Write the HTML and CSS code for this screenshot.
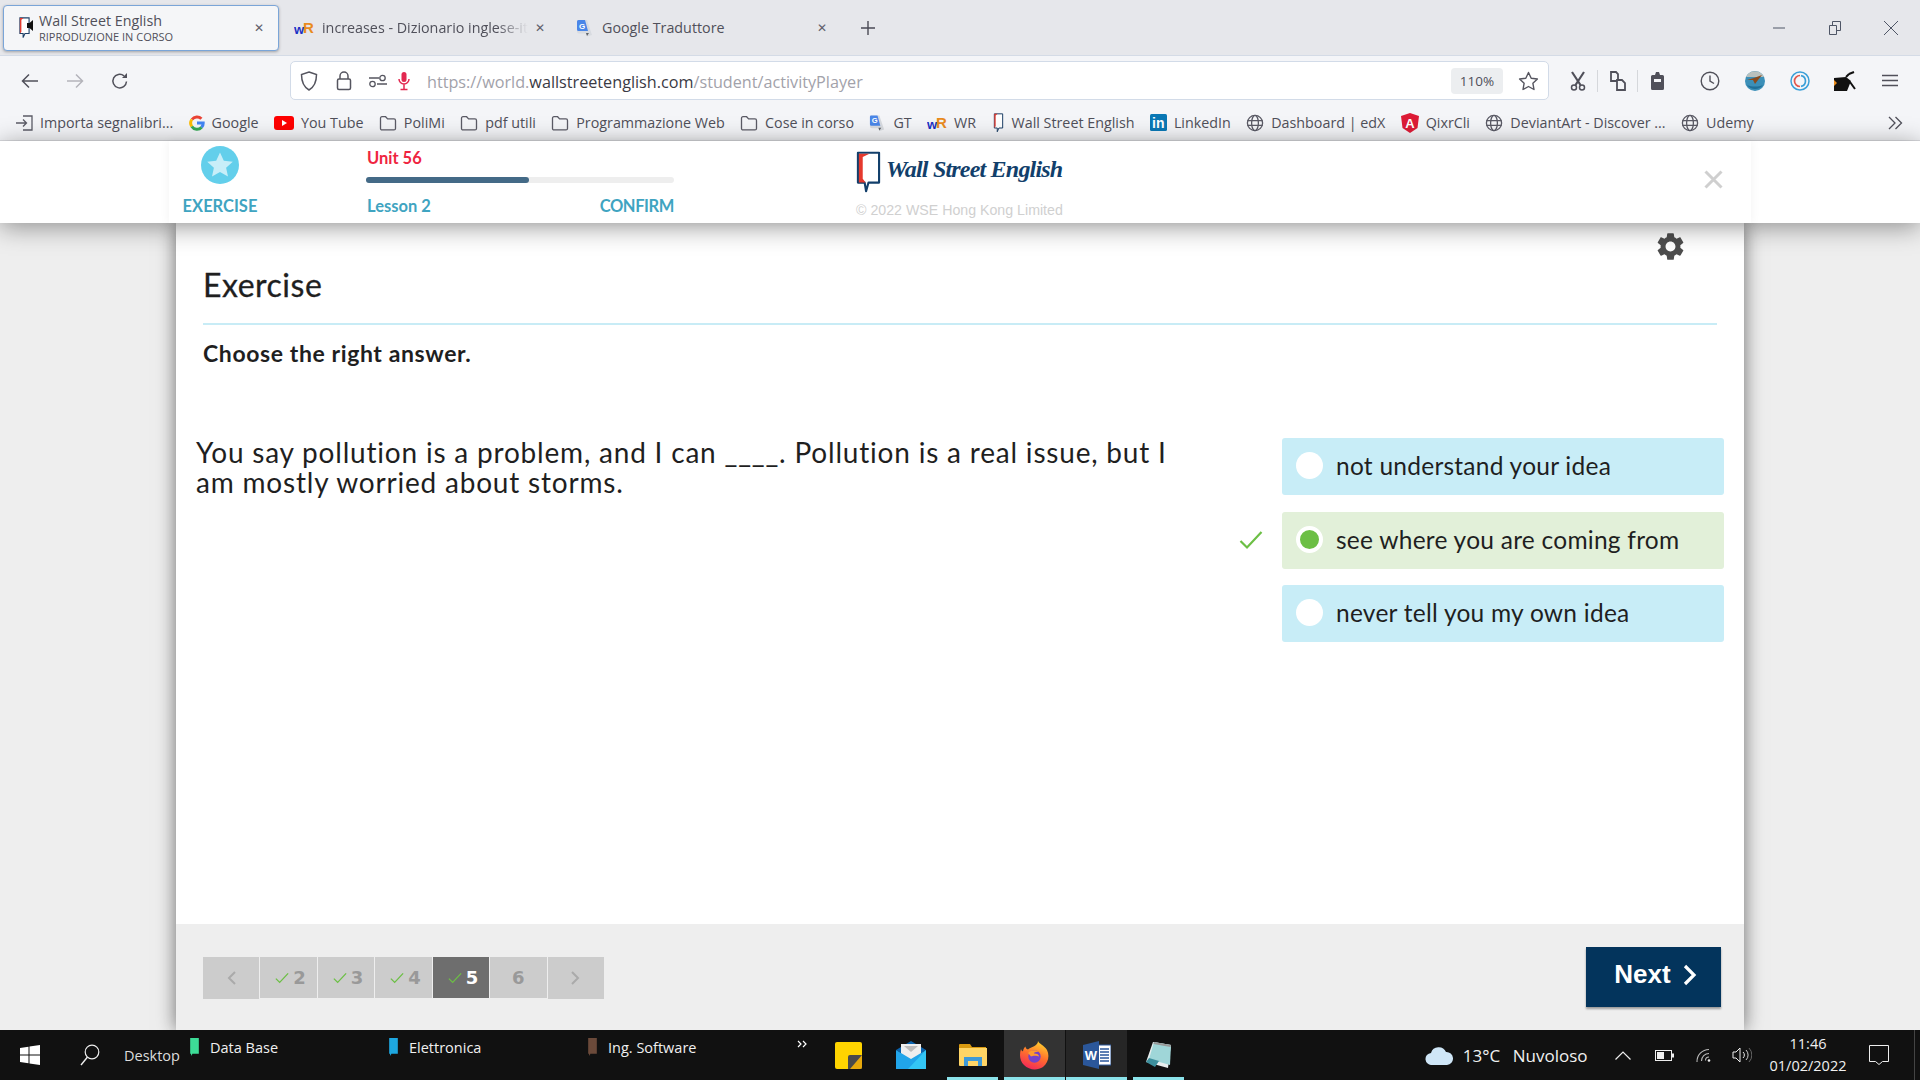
FILE: index.html
```html
<!DOCTYPE html>
<html lang="it">
<head>
    <meta charset="UTF-8">
    <title>Wall Street English</title>
    <link rel="stylesheet" href="styles.css">
</head>
<body>
    <svg class="defs" width="0" height="0">
        <symbol id="folder" viewBox="0 0 18 16"><path d="M1.5 3.2c0-.9.6-1.5 1.5-1.5h3.6l2 2.2H15c.9 0 1.5.6 1.5 1.5v8c0 .9-.6 1.5-1.5 1.5H3c-.9 0-1.5-.6-1.5-1.5z" fill="none" stroke="#5b5b66" stroke-width="1.3"/></symbol>
        <symbol id="globe" viewBox="0 0 18 18"><g fill="none" stroke="#5b5b66" stroke-width="1.3"><circle cx="9" cy="9" r="7.6"/><ellipse cx="9" cy="9" rx="3.4" ry="7.6"/><path d="M1.4 6.6h15.2M1.4 11.4h15.2"/></g></symbol>
        <symbol id="gt" viewBox="0 0 18 18"><path d="M1 1h10l5 15-5 1.5-1-3H3a2 2 0 0 1-2-2z" fill="#d8dbe0"/><path d="M1 2.5A1.5 1.5 0 0 1 2.5 1H9l3 11H2.5A1.5 1.5 0 0 1 1 10.5z" fill="#4a86e8"/><text x="3" y="9.5" font-size="8" font-weight="700" fill="#fff" font-family="Liberation Sans">G</text><path d="M10 14h3l-2 3z" fill="#5f6368"/></symbol>
        <symbol id="wr" viewBox="0 0 20 14"><text x="0" y="13" font-size="13" font-weight="700" fill="#1b2fc4" font-family="Liberation Sans">w</text><text x="9" y="12" font-size="15" font-weight="700" fill="#e98b1f" font-family="Liberation Sans">R</text></symbol>
        <symbol id="wse" viewBox="0 0 14 24"><path d="M2 1h10v17H7.5L5.5 22.5V18H2z" fill="#fff" stroke="#1d3f66" stroke-width="1.2"/><path d="M2 1h4L3.6 3v13L2 18z" fill="#e23b30"/></symbol>
        <symbol id="tick" viewBox="0 0 24 20"><path d="M1.5 11L8 17.5 22.5 2" fill="none" stroke="#6cbf45" stroke-width="2.2"/></symbol>
    </svg>

    <div class="window">
        <!-- Schede del browser -->
        <div class="tabstrip">
            <div class="tab tab-active">
                <svg class="tab-icon" width="18" height="22" viewBox="0 0 18 22"><use href="#wse" width="13" height="22"/><path d="M9 6h2.5L15 3v11l-3.5-3H9z" fill="#111"/></svg>
                <div class="tab-titles">
                    <div class="tab-name">Wall Street English</div>
                    <div class="tab-sub">RIPRODUZIONE IN CORSO</div>
                </div>
                <span class="tab-close">✕</span>
            </div>
            <div class="tab">
                <svg class="tab-icon" width="20" height="14"><use href="#wr"/></svg>
                <div class="tab-name tab-fade">increases - Dizionario inglese-it</div>
                <span class="tab-close">✕</span>
            </div>
            <div class="tab">
                <svg class="tab-icon" width="18" height="18"><use href="#gt"/></svg>
                <div class="tab-name">Google Traduttore</div>
                <span class="tab-close">✕</span>
            </div>
            <svg class="new-tab" width="16" height="16" viewBox="0 0 16 16"><path d="M8 1v14M1 8h14" stroke="#4a4a55" stroke-width="1.4"/></svg>
            <div class="win-controls">
                <div class="win-btn"><svg width="12" height="12" viewBox="0 0 12 12"><path d="M0 6h12" stroke="#4f5666"/></svg></div>
                <div class="win-btn"><svg width="12" height="14" viewBox="0 0 12 14"><path d="M.5 4.5h7v9h-7zM3.5 4V.5h8v9H8" fill="none" stroke="#4f5666"/></svg></div>
                <div class="win-btn"><svg width="14" height="14" viewBox="0 0 14 14"><path d="M0 0l14 14M14 0L0 14" stroke="#4f5666"/></svg></div>
            </div>
        </div>

        <!-- Barra indirizzi -->
        <div class="toolbar">
            <div class="nav-btn"><svg width="18" height="16" viewBox="0 0 18 16"><path d="M17 8H2M8 1.5L1.5 8 8 14.5" fill="none" stroke="#50505a" stroke-width="1.5"/></svg></div>
            <div class="nav-btn"><svg width="18" height="16" viewBox="0 0 18 16"><path d="M1 8h15M10 1.5L16.5 8 10 14.5" fill="none" stroke="#b4b4ba" stroke-width="1.5"/></svg></div>
            <div class="nav-btn"><svg width="18" height="18" viewBox="0 0 18 18"><path d="M15.5 9.5A6.8 6.8 0 1 1 13 3.8" fill="none" stroke="#50505a" stroke-width="1.5"/><path d="M16 1v5h-5z" fill="#50505a"/></svg></div>
            <div class="urlbar">
                <svg class="url-shield" width="18" height="20" viewBox="0 0 18 20"><path d="M9 1l7.5 2.5c0 7-1.5 12-7.5 15.5C3 15.5 1.5 10.5 1.5 3.5z" fill="none" stroke="#55555f" stroke-width="1.5"/></svg>
                <svg class="url-lock" width="16" height="20" viewBox="0 0 16 20"><path d="M4 8V5a4 4 0 0 1 8 0v3" fill="none" stroke="#55555f" stroke-width="1.5"/><rect x="1.5" y="8" width="13" height="10.5" rx="1.5" fill="none" stroke="#55555f" stroke-width="1.5"/></svg>
                <svg class="url-perm" width="18" height="14" viewBox="0 0 18 14"><path d="M0 4h10M8 10h10" stroke="#55555f" stroke-width="1.5"/><circle cx="13.5" cy="4" r="2.7" fill="none" stroke="#55555f" stroke-width="1.3"/><circle cx="3.5" cy="10" r="2.7" fill="none" stroke="#55555f" stroke-width="1.3"/></svg>
                <svg class="url-mic" width="12" height="20" viewBox="0 0 12 20"><rect x="3.5" y="1" width="5" height="10" rx="2.5" fill="#e22850"/><path d="M1 8a5 5 0 0 0 10 0M6 13v5M2.5 18.5h7" fill="none" stroke="#e22850" stroke-width="1.5"/></svg>
                <div class="url-text">https://world.<span class="url-host">wallstreetenglish.com</span>/student/activityPlayer</div>
                <div class="zoom-level">110%</div>
                <svg class="url-star" width="21" height="20" viewBox="0 0 21 20"><path d="M10.5 1.5l2.7 5.7 6.2.8-4.5 4.3 1.1 6.2-5.500-3-5.500 3 1.100-6.200L1.600 8l6.200-.8z" fill="none" stroke="#55555f" stroke-width="1.4" stroke-linejoin="round"/></svg>
            </div>
            <div class="tool-icons">
                <div class="tool-btn"><svg width="16" height="20" viewBox="0 0 16 20"><path d="M2 1l8.500 13M14 1L5.500 14" stroke="#50505a" stroke-width="2.2"/><circle cx="4" cy="16.5" r="2.5" fill="none" stroke="#50505a" stroke-width="1.5"/><circle cx="12" cy="16.5" r="2.5" fill="none" stroke="#50505a" stroke-width="1.5"/></svg></div>
                <div class="tool-sep"></div>
                <div class="tool-btn"><svg width="18" height="20" viewBox="0 0 18 20"><path d="M2 1h5l2 2v7H2z" fill="none" stroke="#50505a" stroke-width="1.8"/><path d="M8 9h5l3 3v7H8z" fill="#f4f5f8" stroke="#50505a" stroke-width="1.8"/></svg></div>
                <div class="tool-sep"></div>
                <div class="tool-btn"><svg width="15" height="20" viewBox="0 0 15 20"><path d="M1 5.5A1.5 1.5 0 0 1 2.5 4H5l1-3h3l1 3h2.5A1.5 1.5 0 0 1 14 5.500v12a1.500 1.500 0 0 1-1.500 1.500h-10A1.500 1.500 0 0 1 1 17.500z" fill="#50505a"/><path d="M4 8h7v3H4z" fill="#f4f5f8"/></svg></div>
                <div class="tool-slot tool-clock"><svg width="20" height="20" viewBox="0 0 20 20"><circle cx="10" cy="10" r="8.8" fill="none" stroke="#50505a" stroke-width="1.4"/><path d="M10 4.5V10l4 2.5" fill="none" stroke="#50505a" stroke-width="1.4"/></svg></div>
                <div class="tool-slot"><svg width="20" height="20" viewBox="0 0 20 20"><circle cx="10" cy="10" r="10" fill="#3b8fb8"/><path d="M1 6a10 10 0 0 1 18 0z" fill="#b9c0bd"/><path d="M2 9l7-2 8-3-4 5-3 4-2-4z" fill="#8a4a1c"/><path d="M2 14c5 2 11 2 16 0a10 10 0 0 1-16 0z" fill="#1f6f98"/></svg></div>
                <div class="tool-slot"><svg width="20" height="20" viewBox="0 0 20 20"><circle cx="10" cy="10" r="9" fill="none" stroke="#3a9fd8" stroke-width="1.5"/><path d="M10 4.5a5.5 5.5 0 0 0 0 11" fill="none" stroke="#e2574c" stroke-width="1.7"/><path d="M11 4.6a5.5 5.5 0 0 1 0 10.8" fill="none" stroke="#3a9fd8" stroke-width="1.7"/></svg></div>
                <div class="tool-slot"><svg width="22" height="22" viewBox="0 0 22 22"><path d="M0 8l12-1 5 4-4 10H0z" fill="#111"/><path d="M0 10l3 3-3 3z" fill="#e88a1a"/><path d="M15 4l5-2M16 12l5 7M12 7l3-3" stroke="#111" stroke-width="2"/></svg></div>
                <div class="tool-slot"><svg width="16" height="13" viewBox="0 0 16 13"><path d="M0 1.5h16M0 6.5h16M0 11.5h16" stroke="#50505a" stroke-width="1.5"/></svg></div>
            </div>
        </div>

        <!-- Segnalibri -->
        <div class="bookmarks">
            <div class="bm"><svg width="17" height="16" viewBox="0 0 17 16"><path d="M7 1h9v14H7M0 8h10M7 4.5L10.5 8 7 11.5" fill="none" stroke="#5b5b66" stroke-width="1.3"/></svg>Importa segnalibri...</div>
            <div class="bm"><svg width="16" height="16" viewBox="0 0 16 16"><g fill="none" stroke-width="3"><path d="M3 4.5A6.2 6.2 0 0 1 12.4 3.7" stroke="#ea4335"/><path d="M2.8 11.5a6.2 6.2 0 0 1 0-7" stroke="#fbbc05"/><path d="M12.6 12.3A6.2 6.2 0 0 1 2.8 11.5" stroke="#34a853"/><path d="M8 8h6.2a6.2 6.2 0 0 1-1.6 4.3" stroke="#4285f4"/></g></svg>Google</div>
            <div class="bm"><svg width="20" height="14" viewBox="0 0 20 14"><rect width="20" height="14" rx="3" fill="#f00"/><path d="M8 4l5 3-5 3z" fill="#fff"/></svg>You Tube</div>
            <div class="bm"><svg width="18" height="16"><use href="#folder"/></svg>PoliMi</div>
            <div class="bm"><svg width="18" height="16"><use href="#folder"/></svg>pdf utili</div>
            <div class="bm"><svg width="18" height="16"><use href="#folder"/></svg>Programmazione Web</div>
            <div class="bm"><svg width="18" height="16"><use href="#folder"/></svg>Cose in corso</div>
            <div class="bm"><svg width="17" height="18"><use href="#gt"/></svg>GT</div>
            <div class="bm"><svg width="20" height="14"><use href="#wr"/></svg>WR</div>
            <div class="bm"><svg width="13" height="20"><use href="#wse"/></svg>Wall Street English</div>
            <div class="bm"><svg width="17" height="17" viewBox="0 0 17 17"><rect width="17" height="17" rx="1.5" fill="#0a78b5"/><text x="2" y="14" font-size="14" font-weight="700" fill="#fff" font-family="Liberation Sans">in</text></svg>LinkedIn</div>
            <div class="bm"><svg width="18" height="18"><use href="#globe"/></svg>Dashboard | edX</div>
            <div class="bm"><svg width="18" height="20" viewBox="0 0 18 20"><path d="M9 0l9 3-1.5 12L9 20l-7.5-5L0 3z" fill="#dd1b36"/><text x="9" y="15" font-size="13" font-weight="700" fill="#fff" text-anchor="middle" font-family="Liberation Sans">A</text></svg>QixrCli</div>
            <div class="bm"><svg width="18" height="18"><use href="#globe"/></svg>DeviantArt - Discover ...</div>
            <div class="bm"><svg width="18" height="18"><use href="#globe"/></svg>Udemy</div>
            <svg class="bm-more" width="15" height="14" viewBox="0 0 15 14"><path d="M1 1l6 6-6 6M7.5 1l6 6-6 6" fill="none" stroke="#50505a" stroke-width="1.3"/></svg>
        </div>

        <!-- Pagina -->
        <div class="page">
            <header class="app-header">
                <div class="header-inner">
                    <div class="activity">
                        <svg width="38" height="38" viewBox="0 0 38 38"><circle cx="19" cy="19" r="19" fill="#63cfeb"/><path d="M19 6.5l3.8 8.200 9 1-6.700 6 1.900 8.800-8-4.500-8 4.500 1.900-8.800-6.700-6 9-1z" fill="#c8eef8"/></svg>
                        <div class="activity-name">EXERCISE</div>
                    </div>
                    <div class="progress">
                        <div class="unit">Unit 56</div>
                        <div class="bar"><div class="bar-fill" style="width: 53%"></div></div>
                        <div class="progress-labels"><span>Lesson 2</span><span class="confirm">CONFIRM</span></div>
                    </div>
                    <div class="brand">
                        <div class="logo">
                            <svg class="logo-mark" width="25" height="44" viewBox="0 0 26 44"><path d="M2 2h22v31H13l-2.500 9-1.500-9H2z" fill="#fff" stroke="#123f6b" stroke-width="2.2" stroke-linejoin="round"/><path d="M3 3h11L7 6.500V29l3 4H3z" fill="#e5392d"/></svg>
                            <span class="logo-text">Wall Street English</span>
                        </div>
                        <div class="copyright">© 2022 WSE Hong Kong Limited</div>
                    </div>
                    <svg class="close-x" width="19" height="19" viewBox="0 0 19 19"><path d="M1.5 1.5l16 16M17.5 1.5l-16 16" stroke="#cfcfcf" stroke-width="3"/></svg>
                </div>
            </header>

            <main class="card">
                <div class="card-body">
                    <div class="settings">
                        <svg width="33" height="33" viewBox="0 0 24 24"><path fill="#4d4d4d" d="M19.14 12.94c.04-.3.06-.61.06-.94 0-.32-.02-.64-.07-.94l2.03-1.58c.18-.14.23-.41.12-.61l-1.92-3.32c-.12-.22-.37-.29-.59-.22l-2.39.96c-.5-.38-1.03-.7-1.62-.94l-.36-2.54c-.04-.24-.24-.41-.48-.41h-3.84c-.24 0-.43.17-.47.41l-.36 2.54c-.59.24-1.13.57-1.62.94l-2.39-.96c-.22-.08-.47 0-.59.22L2.74 8.87c-.12.21-.08.47.12.61l2.03 1.58c-.05.3-.09.63-.09.94s.02.64.07.94l-2.03 1.58c-.18.14-.23.41-.12.61l1.92 3.32c.12.22.37.29.59.22l2.39-.96c.5.38 1.03.7 1.62.94l.36 2.54c.05.24.24.41.48.41h3.84c.24 0 .44-.17.47-.41l.36-2.54c.59-.24 1.13-.56 1.62-.94l2.39.96c.22.08.47 0 .59-.22l1.92-3.32c.12-.22.07-.47-.12-.61l-2.01-1.58zM12 15.6c-1.98 0-3.6-1.62-3.6-3.6s1.62-3.6 3.6-3.6 3.6 1.62 3.6 3.6-1.62 3.6-3.6 3.6z"/></svg>
                    </div>
                    <h1 class="title">Exercise</h1>
                    <div class="rule"></div>
                    <p class="instruction">Choose the right answer.</p>
                    <div class="quiz">
                        <p class="question">You say pollution is a problem, and I can ____. Pollution is a real issue, but I am mostly worried about storms.</p>
                        <div class="answers">
                            <div class="answer-row">
                                <span></span>
                                <div class="answer"><span class="radio"></span>not understand your idea</div>
                            </div>
                            <div class="answer-row">
                                <svg class="answer-tick" width="24" height="20"><use href="#tick"/></svg>
                                <div class="answer answer-right"><span class="radio"></span>see where you are coming from</div>
                            </div>
                            <div class="answer-row">
                                <span></span>
                                <div class="answer"><span class="radio"></span>never tell you my own idea</div>
                            </div>
                        </div>
                    </div>
                </div>
                <div class="card-footer">
                    <div class="pager">
                        <div class="pg pg-arrow"><svg width="9" height="14" viewBox="0 0 9 14"><path d="M8 1L2 7l6 6" fill="none" stroke="#aaa" stroke-width="2"/></svg></div>
                        <div class="pg"><svg class="pg-tick" width="14" height="12"><use href="#tick"/></svg>2</div>
                        <div class="pg"><svg class="pg-tick" width="14" height="12"><use href="#tick"/></svg>3</div>
                        <div class="pg"><svg class="pg-tick" width="14" height="12"><use href="#tick"/></svg>4</div>
                        <div class="pg pg-current"><svg class="pg-tick" width="14" height="12"><use href="#tick"/></svg>5</div>
                        <div class="pg">6</div>
                        <div class="pg pg-arrow"><svg width="9" height="14" viewBox="0 0 9 14"><path d="M1 1l6 6-6 6" fill="none" stroke="#aaa" stroke-width="2"/></svg></div>
                    </div>
                    <button class="next-btn">Next<svg width="14" height="22" viewBox="0 0 14 22"><path d="M2 2l9 9-9 9" fill="none" stroke="#fff" stroke-width="3.2"/></svg></button>
                </div>
            </main>
        </div>

        <!-- Barra delle applicazioni -->
        <footer class="taskbar">
            <svg class="tb-win" width="20" height="20" viewBox="0 0 20 20"><path d="M0 3l8.5-1.2v7.600H0zM9.500 1.600L20 0v9.400H9.500zM0 10.500h8.500v7.700L0 17zM9.500 10.500H20V20L9.500 18.400z" fill="#fff"/></svg>
            <svg class="tb-search" width="20" height="22" viewBox="0 0 20 22"><circle cx="12" cy="8" r="6.8" fill="none" stroke="#eee" stroke-width="1.2"/><path d="M7.5 13L1 21" stroke="#eee" stroke-width="1.4"/></svg>
            <span class="tb-desktop">Desktop</span>
            <div class="tb-link"><svg width="11" height="18" viewBox="0 0 12 25"><path d="M0 0h12v22H3l-1 3-1-3H0z" fill="#3ddc97"/></svg>Data Base</div>
            <div class="tb-link"><svg width="11" height="18" viewBox="0 0 12 25"><path d="M0 0h12v22H3l-1 3-1-3H0z" fill="#1ea7e0"/></svg>Elettronica</div>
            <div class="tb-link"><svg width="11" height="18" viewBox="0 0 12 25"><path d="M0 0h12v22H3l-1 3-1-3H0z" fill="#6b4a3a"/></svg>Ing. Software</div>
            <svg class="tb-more" width="11" height="8" viewBox="0 0 11 8"><path d="M1 1l3 3-3 3M6 1l3 3-3 3" fill="none" stroke="#fff" stroke-width="1.2"/></svg>
            <div class="tb-apps">
                <div class="tb-app"><svg width="27" height="27" viewBox="0 0 27 27"><rect width="27" height="27" rx="2" fill="#ffd400"/><path d="M13 27V15a2 2 0 0 1 2-2h12v12a2 2 0 0 1-2 2z" fill="#4a4a4a"/><path d="M15 27l12-14v12a2 2 0 0 1-2 2z" fill="#e8a90c"/></svg></div>
                <div class="tb-app"><svg width="30" height="28" viewBox="0 0 30 28"><path d="M15 0l15 9-15 9L0 9z" fill="#0b63ad"/><path d="M5 3h20v12l-10 5L5 15z" fill="#eee"/><path d="M8 5l7 6 7-6z" fill="#bbb"/><path d="M0 9l15 9 15-9v19H0z" fill="#21a5ea"/><path d="M30 9v19H12z" fill="#33c6f5"/></svg></div>
                <div class="tb-app tb-app-open"><svg width="28" height="24" viewBox="0 0 28 24"><path d="M0 2a1 1 0 0 1 1-1h10l2 3h14v18H0z" fill="#d99a10"/><path d="M0 5h28v17a1 1 0 0 1-1 1H1a1 1 0 0 1-1-1z" fill="#ffd566"/><path d="M5 23v-9h18v9h-4v-5H9v5z" fill="#3f9ad8"/></svg></div>
                <div class="tb-app tb-app-open tb-app-active">
                    <svg width="29" height="29" viewBox="0 0 29 29">
                        <defs><linearGradient id="fx" x1="0.7" y1="0" x2="0.3" y2="1"><stop offset="0" stop-color="#ffd22e"/><stop offset="0.5" stop-color="#ff6f2c"/><stop offset="1" stop-color="#f3255b"/></linearGradient></defs>
                        <path d="M18 0c1 3 6 4 9 9 3 6 1 13-4 17-6 4-14 3-19-2C0 20-1 14 1 8c.5 1.5 1 2 2 2.500.2-2 1-4 2.500-5 0 1.500 1 2.500 2.500 3C11 6 18 5 18 0z" fill="url(#fx)"/>
                        <circle cx="14.5" cy="15.5" r="6.2" fill="#7542c9"/>
                        <path d="M8 12c2-3 8-4 11-1-3-.5-5 .5-5 1.500 3 0 5 1 5 3-2-1-6-1-8 0z" fill="#ff9a2e"/>
                    </svg>
                </div>
                <div class="tb-app tb-app-open tb-app-pinned">
                    <svg width="28" height="28" viewBox="0 0 28 28"><path d="M15 4h13v20H15z" fill="#fff" stroke="#2b579a"/><path d="M17 8h9M17 11h9M17 14h9M17 17h9M17 20h9" stroke="#2b579a" stroke-width="1.4"/><path d="M0 4l16-4v28L0 24z" fill="#2b579a"/><text x="8" y="19" font-size="13" font-weight="700" fill="#fff" text-anchor="middle" font-family="Liberation Sans">W</text></svg>
                </div>
                <div class="tb-app tb-app-open"><svg width="28" height="28" viewBox="0 0 28 28"><path d="M8 1l18 3-3 23L1 21z" fill="#e8eeee"/><path d="M9 1l17 3-1 20L4 18z" fill="#9fd6d8"/><path d="M1 21l3-4 10 3-4 6z" fill="#3d8f9c"/><path d="M9 1l17 3-.5 2-17-3z" fill="#999"/></svg></div>
            </div>
            <div class="tray">
                <svg class="tray-cloud" width="28" height="20" viewBox="0 0 28 20"><path d="M7 20a6 6 0 0 1-1-12 8 8 0 0 1 15-1 6.500 6.500 0 0 1 1 13z" fill="#cfe6f7"/></svg>
                <span class="tray-temp">13°C</span>
                <span class="tray-sky">Nuvoloso</span>
                <svg class="tray-up" width="16" height="9" viewBox="0 0 16 9"><path d="M.5 8.500L8 1l7.500 7.500" fill="none" stroke="#eee" stroke-width="1.2"/></svg>
                <svg class="tray-bat" width="19" height="11" viewBox="0 0 19 11"><rect x=".5" y=".5" width="16" height="10" fill="none" stroke="#eee"/><rect x="2" y="2" width="7" height="7" fill="#eee"/><path d="M17 3.500h2v4h-2z" fill="#eee"/></svg>
                <svg class="tray-wifi" width="16" height="16" viewBox="0 0 16 16"><circle cx="13" cy="13.5" r="1.3" fill="#eee"/><path d="M9.500 13.500A3.500 3.500 0 0 1 13 10M5.500 14A7.500 7.500 0 0 1 13 6.500M1 15A12 12 0 0 1 13 2.500" fill="none" stroke="#bbb" stroke-width="1.1"/></svg>
                <svg class="tray-vol" width="20" height="16" viewBox="0 0 20 16"><path d="M1 5h3l4-4v14l-4-4H1z" fill="none" stroke="#eee"/><path d="M11 5a4 4 0 0 1 0 6" fill="none" stroke="#eee"/><path d="M14 3a7 7 0 0 1 0 10" fill="none" stroke="#ccc"/><path d="M17 1a10 10 0 0 1 0 14" fill="none" stroke="#666"/></svg>
                <div class="tray-clock"><div>11:46</div><div>01/02/2022</div></div>
                <svg class="tray-note" width="20" height="20" viewBox="0 0 20 20"><path d="M.5.5h19v16h-6l-3.500 3-3.500-3h-6z" fill="none" stroke="#eee"/></svg>
                <div class="tray-desk"></div>
            </div>
        </footer>
    </div>
</body>
</html>
```

FILE: styles.css
```css
* {
    box-sizing: border-box;
}

html, body {
    margin: 0;
    padding: 0;
    height: 100%;
    overflow: hidden;
}

body {
    font-family: "Open Sans", "Noto Sans", sans-serif;
    color: #50505a;
}

.defs {
    display: none;
}

.window {
    display: flex;
    flex-direction: column;
    height: 1080px;
}

/* schede */
.tabstrip {
    display: flex;
    align-items: center;
    height: 56px;
    padding: 0 0 0 3px;
    background: #e6e7eb;
    border-bottom: 1px solid #d4dbe6;
    flex: none;
}

.tab {
    display: flex;
    align-items: center;
    width: 282px;
    height: 46px;
    padding: 0 16px 0 10px;
    font-size: 14.3px;
}

.tab-active {
    width: 276px;
    margin-right: 5px;
    padding: 0 9px 0 14px;
    background: #f5f6f8;
    border: 1px solid #7aa5d8;
    border-radius: 4px;
    box-shadow: 0 1px 3px rgba(0, 0, 0, 0.3);
}

.tab-icon {
    flex: none;
    margin-right: 8px;
}

.tab-active .tab-icon {
    margin-right: 3px;
}

.tab-titles {
    width: 200px;
}

.tab-name {
    white-space: nowrap;
    line-height: 18px;
}

.tab-fade {
    -webkit-mask-image: linear-gradient(to right, #000 85%, transparent);
    mask-image: linear-gradient(to right, #000 85%, transparent);
}

.tab-sub {
    font-size: 11px;
    line-height: 14px;
}

.tab-close {
    width: 20px;
    margin-left: auto;
    font-size: 12px;
    color: #60606a;
    text-align: center;
}

.new-tab {
    margin-left: 12px;
}

.win-controls {
    display: flex;
    margin-left: auto;
    margin-right: 1px;
}

.win-btn {
    display: flex;
    align-items: center;
    justify-content: center;
    width: 56px;
    height: 54px;
}

/* barra indirizzi */
.toolbar {
    display: flex;
    align-items: center;
    height: 49px;
    padding-left: 7px;
    background: #f4f5f8;
    flex: none;
}

.nav-btn {
    display: flex;
    align-items: center;
    justify-content: center;
    width: 45px;
}

.urlbar {
    display: flex;
    align-items: center;
    width: 1259px;
    height: 39px;
    margin-left: 148px;
    background: #fff;
    border: 1px solid #d2dbe8;
    border-radius: 5px;
}

.url-shield {
    margin-left: 9px;
}

.url-lock {
    margin-left: 18px;
}

.url-perm {
    margin-left: 17px;
}

.url-mic {
    margin-left: 11px;
}

.url-text {
    margin-left: 17px;
    padding-top: 2px;
    font-size: 16.2px;
    color: #a2a2aa;
}

.url-host {
    color: #3a3a44;
}

.zoom-level {
    width: 52px;
    height: 26px;
    margin-left: auto;
    line-height: 26px;
    text-align: center;
    font-size: 13.5px;
    background: #eceef0;
    border-radius: 4px;
}

.url-star {
    margin: 0 9px 0 15px;
}

.tool-icons {
    display: flex;
    align-items: center;
}

.tool-btn {
    display: flex;
    align-items: center;
    justify-content: center;
    width: 39px;
}

.tool-btn:first-child {
    margin-left: 9px;
}

.tool-sep {
    width: 1px;
    height: 22px;
    background: #d5d7db;
}

.tool-slot {
    display: flex;
    align-items: center;
    justify-content: center;
    width: 45px;
}

.tool-clock {
    margin-left: 10px;
}

/* segnalibri */
.bookmarks {
    display: flex;
    align-items: center;
    height: 36px;
    padding: 0 0 0 16px;
    background: #f4f5f8;
    border-bottom: 1px solid #dcdde1;
    font-size: 14.3px;
    white-space: nowrap;
    flex: none;
}

.bm {
    display: flex;
    align-items: center;
    gap: 7px;
    margin-right: 15.4px;
}

.bm-more {
    margin-left: auto;
    margin-right: 17px;
}

/* pagina */
.page {
    display: flex;
    flex-direction: column;
    flex: 1;
    min-height: 0;
    background: #eeeeee;
    font-family: Lato, sans-serif;
    color: #1f1f1f;
}

.app-header {
    position: relative;
    z-index: 2;
    height: 82px;
    background: #fff;
    box-shadow: 0 4px 24px rgba(0, 0, 0, 0.4);
    flex: none;
}

.header-inner {
    display: flex;
    width: 1582px;
    height: 82px;
    margin: 0 auto;
    box-shadow: 0 0 10px rgba(0, 0, 0, 0.06);
}

.activity {
    display: flex;
    flex-direction: column;
    align-items: center;
    width: 102px;
    padding-top: 5px;
}

.activity-name {
    margin-top: 12px;
    font-size: 16.5px;
    font-weight: 700;
    color: #3fa4c1;
}

.progress {
    width: 308px;
    margin-left: 95px;
    padding-top: 7px;
}

.unit {
    padding-left: 1px;
    font-size: 16.5px;
    line-height: 20px;
    font-weight: 700;
    color: #ef2440;
}

.bar {
    height: 6px;
    margin-top: 9px;
    background: #eeeeee;
    border-radius: 3px;
}

.bar-fill {
    height: 6px;
    background: #446a87;
    border-radius: 3px;
}

.progress-labels {
    display: flex;
    justify-content: space-between;
    margin-top: 13px;
    padding-left: 1px;
    font-size: 16.5px;
    font-weight: 700;
    color: #3fa4c1;
}

.confirm {
    letter-spacing: -0.4px;
}

.brand {
    width: 210px;
    margin-left: 182px;
    padding-top: 9px;
}

.logo {
    display: flex;
    align-items: center;
    height: 44px;
}

.logo-mark {
    flex: none;
}

.logo-text {
    margin: -6px 0 0 5px;
    font-family: "Liberation Serif", serif;
    font-style: italic;
    font-weight: 700;
    font-size: 24px;
    letter-spacing: -0.8px;
    color: #123f6b;
    white-space: nowrap;
}

.copyright {
    margin-top: 8px;
    font-family: "Liberation Sans", sans-serif;
    font-size: 14.2px;
    color: #d0d0d0;
    white-space: nowrap;
}

.close-x {
    margin: 29px 0 0 638px;
}

.card {
    display: flex;
    flex-direction: column;
    flex: 1;
    width: 1568px;
    margin: 0 auto;
    background: #fff;
    box-shadow: 0 0 18px rgba(0, 0, 0, 0.55);
}

.card-body {
    flex: 1;
    padding: 0 27px;
}

.settings {
    display: flex;
    justify-content: flex-end;
    padding: 7px 30px 0 0;
}

.title {
    margin: 4px 0 0;
    font-size: 32px;
    line-height: 36px;
    font-weight: 400;
    letter-spacing: 0.5px;
    -webkit-text-stroke: 0.3px #1f1f1f;
    color: #1f1f1f;
}

.rule {
    height: 2px;
    margin-top: 20px;
    background: #c8ecf6;
}

.instruction {
    margin: 15px 0 0;
    font-size: 23px;
    line-height: 26px;
    font-weight: 700;
    letter-spacing: 0.6px;
    color: #1f1f1f;
}

.quiz {
    display: flex;
    justify-content: space-between;
    margin: 72px -7px 0;
}

.question {
    width: 1000px;
    margin: -1px 0 0;
    font-size: 28px;
    line-height: 30px;
    letter-spacing: 0.8px;
}

.answers {
    display: flex;
    flex-direction: column;
    gap: 16.5px;
    width: 496px;
}

.answer-row {
    display: grid;
    grid-template-columns: 54px 1fr;
    align-items: center;
}

.answer-tick {
    margin-left: 11px;
}

.answer {
    display: flex;
    align-items: center;
    height: 57px;
    padding: 0 0 2px 14px;
    font-size: 24.5px;
    letter-spacing: 0.25px;
    background: #c8edf7;
    border-radius: 3px;
}

.radio {
    display: block;
    width: 27px;
    height: 27px;
    margin-right: 13px;
    background: #fff;
    border-radius: 50%;
}

.answer-right {
    background: #e2f0d9;
}

.answer-right .radio {
    border: 4px solid #fff;
    background: #6cbf45;
}

.card-footer {
    display: flex;
    justify-content: space-between;
    align-items: flex-start;
    height: 106px;
    padding: 0 23px 0 27px;
    background: #eeeeee;
    flex: none;
}

.pager {
    display: grid;
    grid-template-columns: repeat(7, 1fr);
    gap: 1px;
    width: 401px;
    margin-top: 33px;
    font-family: "DejaVu Sans", sans-serif;
    font-size: 18px;
    font-weight: 700;
}

.pg {
    display: flex;
    align-items: center;
    justify-content: center;
    gap: 4px;
    height: 41px;
    background: #cccccc;
    color: #999999;
}

.pg-tick {
    margin-left: 4px;
}

.pg-arrow {
    height: 42px;
}

.pg-current {
    background: #6e6e6e;
    color: #fff;
}

.next-btn {
    display: flex;
    align-items: center;
    justify-content: center;
    gap: 12px;
    width: 135px;
    height: 60px;
    margin-top: 23px;
    padding: 0 0 5px 4px;
    font-family: "Liberation Sans", sans-serif;
    font-size: 26px;
    font-weight: 700;
    color: #fff;
    background: #03345c;
    border: 0;
    box-shadow: 0 2px 2px rgba(0, 0, 0, 0.35);
}

/* barra delle applicazioni */
.taskbar {
    display: flex;
    align-items: center;
    height: 50px;
    background: #111111;
    color: #f0f0f0;
    font-size: 14.5px;
    white-space: nowrap;
    flex: none;
}

.tb-win {
    margin-left: 20px;
}

.tb-search {
    margin-left: 40px;
}

.tb-desktop {
    margin-left: 24px;
    width: 65px;
    color: #ddd;
}

.tb-link {
    display: flex;
    align-items: center;
    gap: 10px;
    width: 199px;
    align-self: flex-start;
    height: 34px;
}

.tb-more {
    align-self: flex-start;
    margin: 10px 0 0 11px;
}

.tb-apps {
    display: flex;
    margin-left: 10px;
}

.tb-app {
    position: relative;
    display: flex;
    align-items: center;
    justify-content: center;
    width: 61px;
    height: 50px;
    margin-right: 1px;
}

.tb-app-open::after {
    content: "";
    position: absolute;
    left: 5px;
    right: 5px;
    bottom: 0;
    height: 3px;
    background: #8be3ea;
}

.tb-app-active {
    background: #333333;
}

.tb-app-pinned {
    background: #262626;
}

.tb-app-active::after,
.tb-app-pinned::after {
    left: 0;
    right: 0;
}

.tray {
    display: flex;
    align-items: center;
    align-self: stretch;
    margin-left: auto;
}

.tray-temp {
    margin-left: 10px;
    font-size: 17px;
}

.tray-sky {
    margin-left: 12.5px;
    font-size: 17px;
}

.tray-up {
    margin-left: 27px;
}

.tray-bat {
    margin-left: 24px;
}

.tray-wifi {
    margin-left: 22px;
}

.tray-vol {
    margin-left: 20.5px;
}

.tray-clock {
    width: 100px;
    margin-left: 6px;
    font-size: 14.5px;
    line-height: 22px;
    text-align: center;
}

.tray-note {
    margin-left: 11px;
}

.tray-desk {
    width: 1px;
    height: 100%;
    margin: 0 5px 0 25px;
    background: #444444;
}
```
